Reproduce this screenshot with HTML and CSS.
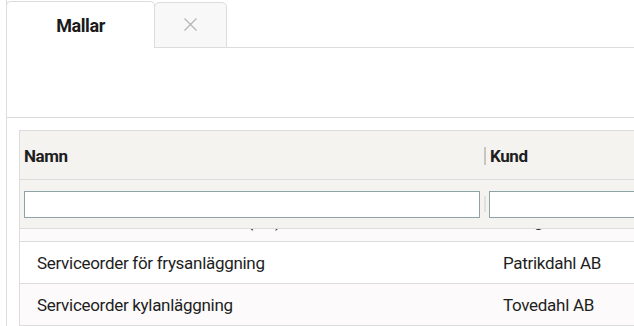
FILE: index.html
```html
<!DOCTYPE html>
<html lang="sv">
<head>
    <meta charset="UTF-8">
    <title>Mallar</title>
    <link rel="stylesheet" href="styles.css">
</head>
<body>
    <div class="panel">
        <div class="tabs">
            <div class="tab active">Mallar</div>
            <div class="tab close">
                <svg width="13" height="13" viewBox="0 0 13 13">
                    <path d="M0.5 0.5 L12.5 12.5 M12.5 0.5 L0.5 12.5" stroke="#b4b4b4" stroke-width="1.2" fill="none"/>
                </svg>
            </div>
            <div class="tab-fill"></div>
        </div>

        <div class="toolbar"></div>

        <div class="content">
            <div class="grid">
                <div class="grid-head">
                    <div class="col-name">Namn</div>
                    <div class="col-kund"><span class="divider"></span>Kund</div>
                </div>
                <div class="grid-filter">
                    <div class="col-name"><input type="text"></div>
                    <div class="col-kund"><span class="divider light"></span><input type="text"></div>
                </div>
                <div class="grid-body">
                    <div class="row alt scrolled">
                        <div class="col-name">Serviceorder ventilationsdon (del)</div>
                        <div class="col-kund">Lindgren AB</div>
                    </div>
                    <div class="row">
                        <div class="col-name">Serviceorder för frysanläggning</div>
                        <div class="col-kund">Patrikdahl AB</div>
                    </div>
                    <div class="row alt">
                        <div class="col-name">Serviceorder kylanläggning</div>
                        <div class="col-kund">Tovedahl AB</div>
                    </div>
                </div>
            </div>
        </div>
    </div>
</body>
</html>
```

FILE: styles.css
```css
:root {
    --line: #dcdcdc;
    --head-bg: #f4f3f0;
    --alt-bg: #fcfafa;
    --text: #1e1e1e;
}

body {
    margin: 0;
    background: #fff;
    font-family: Roboto, "Liberation Sans", sans-serif;
    color: var(--text);
    overflow: hidden;
}

/* Panel with tabs */
.panel {
    margin-left: 6px;
    height: 326px;
    border-left: 1px solid var(--line);
}

.tabs {
    display: flex;
    align-items: flex-end;
    height: 48px;
    margin-left: -1px;
}

.tab {
    height: 46px;
    border: 1px solid var(--line);
    border-radius: 5px 5px 0 0;
    display: flex;
    align-items: center;
    justify-content: center;
    box-sizing: border-box;
}

.tab.active {
    width: 149px;
    height: 47px;
    border-bottom: none;
    font-weight: bold;
    font-size: 18px;
    letter-spacing: -0.4px;
    color: #1a1a1a;
    padding-top: 1px;
}

.tab.close {
    width: 73px;
    margin-left: -1px;
    background: #f9f8f8;
    padding-bottom: 1px;
}

.tab-fill {
    flex: 1;
    border-bottom: 1px solid var(--line);
}

.toolbar {
    height: 69px;
    border-bottom: 1px solid var(--line);
}

.content {
    padding: 12px 0 0 12px;
    overflow: hidden;
}

/* Grid (wider than the window, cut at the right) */
.grid {
    width: 720px;
    border-left: 1px solid var(--line);
    border-top: 1px solid var(--line);
}

.grid-head,
.grid-filter,
.row {
    display: flex;
}

.col-name {
    width: 464px;
    flex-shrink: 0;
    box-sizing: border-box;
}

.col-kund {
    flex: 1;
    display: flex;
    align-items: center;
    min-width: 0;
}

.grid-head {
    height: 48px;
    background: var(--head-bg);
    border-bottom: 1px solid var(--line);
    align-items: center;
    font-weight: bold;
    font-size: 17px;
    letter-spacing: -0.4px;
}

.grid-head .col-name {
    padding-left: 4px;
    padding-top: 2px;
}

.grid-head .col-kund {
    padding-top: 2px;
}

.divider {
    flex-shrink: 0;
    width: 2px;
    height: 18px;
    background: #c6c6c4;
    margin-right: 4px;
}

.divider.light {
    height: 16px;
    background: #e2e1de;
    margin-right: 3px;
}

.grid-filter {
    height: 48px;
    background: var(--head-bg);
    border-bottom: 1px solid var(--line);
    align-items: center;
}

.grid-filter .col-name {
    padding: 0 0 0 4px;
}

.grid-filter input {
    display: block;
    width: 456px;
    height: 27px;
    box-sizing: border-box;
    border: 1px solid #8fa2a6;
    background: #fff;
    margin: 0;
    padding: 0 6px;
}

.grid-filter .col-kund input {
    flex: 1;
    width: auto;
    min-width: 0;
    margin-right: 4px;
}

.grid-body {
    height: 98px;
    overflow: hidden;
}

.row {
    height: 42px;
    align-items: center;
    border-bottom: 1px solid var(--line);
    font-size: 17px;
    letter-spacing: -0.3px;
    box-sizing: border-box;
}

.row.alt {
    background: var(--alt-bg);
}

.row.scrolled {
    margin-top: -29px;
}

.row .col-name {
    padding-left: 17px;
}

.row .col-kund {
    padding-left: 19px;
}
```
